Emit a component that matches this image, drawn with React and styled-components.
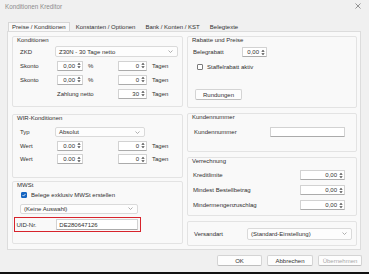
import React from 'react';
import styled, { createGlobalStyle } from 'styled-components';

const GlobalStyle = createGlobalStyle`
  html, body { margin: 0; padding: 0; }
  body { background: #f0f0f0; font-family: "Liberation Sans", Arial, sans-serif; }
`;

const Window = styled.div`
  width: 369px;
  height: 274px;
  box-sizing: border-box;
  background: #f0f0f0;
  color: #303030;
  font-size: 6px;
  display: flex;
  flex-direction: column;
  border-bottom: 2px solid #121212;
  overflow: hidden;
`;

const TitleBar = styled.div`
  height: 12px;
  display: flex;
  align-items: center;
  justify-content: space-between;
  padding: 0 8px 0 5px;
  color: #8c8c8c;
  font-size: 6.3px;
`;

const TabStrip = styled.div`
  display: flex;
  gap: 2px;
  margin: 10px 0 0 8px;
  height: 9px;
  position: relative;
  z-index: 1;
`;

const Tab = styled.div`
  height: 9px;
  padding: 0 3px;
  box-sizing: border-box;
  white-space: nowrap;
  border: 1px solid ${({ $active }) => ($active ? '#d6d6d6' : 'transparent')};
  border-bottom: none;
  background: ${({ $active }) => ($active ? '#f9f9f9' : 'transparent')};
  line-height: 8px;
`;

const Panel = styled.div`
  margin-left: 7px;
  width: 354px;
  height: 219px;
  box-sizing: border-box;
  background: #f9f9f9;
  border: 1px solid #dcdcdc;
  padding: 4px 3px 0 4px;
  display: grid;
  grid-template-columns: 171px 170px;
  column-gap: 4px;
  align-items: start;
`;

const Column = styled.div`
  display: flex;
  flex-direction: column;
`;

const Group = styled.div`
  height: ${({ $h }) => $h}px;
  margin-top: ${({ $mt = 0 }) => $mt}px;
  box-sizing: border-box;
  border: 1px solid #e3e3e3;
  border-radius: 2px;
  padding: 0 4px;
  display: flex;
  flex-direction: column;
  justify-content: ${({ $center }) => ($center ? 'center' : 'flex-start')};
`;

const GroupTitle = styled.div`
  line-height: 6px;
  height: 6px;
  white-space: nowrap;
`;

const FieldGrid = styled.div`
  display: grid;
  grid-template-columns: ${({ $cols }) => $cols};
  grid-auto-rows: ${({ $rh = 11 }) => $rh}px;
  row-gap: ${({ $gap = 3 }) => $gap}px;
  align-items: center;
  margin-top: ${({ $mt = 0 }) => $mt}px;
  padding-left: ${({ $pl = 0 }) => $pl}px;
`;

const Label = styled.span`
  white-space: nowrap;
  grid-column: ${({ $col = 'auto' }) => $col};
`;

const Unit = styled.span`
  padding-left: 5px;
  white-space: nowrap;
`;

const Input = styled.div`
  height: ${({ $h = 10 }) => $h}px;
  width: ${({ $w }) => ($w ? `${$w}px` : 'auto')};
  grid-column: ${({ $col = 'auto' }) => $col};
  box-sizing: border-box;
  background: #fff;
  border: 1px solid #d2d2d2;
  border-bottom-color: #ababab;
  border-radius: 1px;
  display: flex;
  align-items: center;
  justify-content: ${({ $left }) => ($left ? 'flex-start' : 'flex-end')};
  gap: 2px;
  padding: 0 1px 0 2px;
  white-space: nowrap;
`;

const Select = styled.div`
  height: ${({ $h = 11 }) => $h}px;
  width: ${({ $w }) => ($w ? `${$w}px` : 'auto')};
  grid-column: ${({ $col = 'auto' }) => $col};
  margin-left: ${({ $ml = 0 }) => $ml}px;
  box-sizing: border-box;
  background: #fdfdfd;
  border: 1px solid #dadada;
  border-radius: 2px;
  display: flex;
  align-items: center;
  justify-content: space-between;
  padding: 0 4px 0 3px;
  white-space: nowrap;
`;

const CheckRow = styled.div`
  height: 10px;
  display: flex;
  align-items: center;
  gap: 4px;
  padding-left: ${({ $pl = 0 }) => $pl}px;
  margin-top: ${({ $mt = 0 }) => $mt}px;
  white-space: nowrap;
`;

const Box = styled.span`
  width: 6px;
  height: 6px;
  box-sizing: border-box;
  border-radius: 1px;
  border: 1px solid ${({ $on }) => ($on ? '#1665c1' : '#7a7a7a')};
  background: ${({ $on }) => ($on ? '#1665c1' : '#fff')};
  display: flex;
  align-items: center;
  justify-content: center;
`;

const Button = styled.div`
  width: ${({ $w }) => $w}px;
  height: ${({ $h = 11 }) => $h}px;
  margin-top: ${({ $mt = 0 }) => $mt}px;
  margin-left: ${({ $ml = 0 }) => $ml}px;
  box-sizing: border-box;
  background: #fdfdfd;
  border: 1px solid #d4d4d4;
  border-bottom-color: #bdbdbd;
  border-radius: 2px;
  display: flex;
  align-items: center;
  justify-content: center;
  color: ${({ $disabled }) => ($disabled ? '#a8a8a8' : 'inherit')};
  white-space: nowrap;
`;

const MarkedRow = styled.div`
  margin-left: -3px;
  width: 127px;
  height: 15px;
  box-sizing: border-box;
  border: 1.5px solid #d7232c;
  display: flex;
  align-items: center;
  padding: 0 2px 0 1.5px;
`;

const MarkedLabel = styled.span`
  width: 40px;
  white-space: nowrap;
`;

const Stack = styled.div`
  display: flex;
  flex-direction: column;
  gap: ${({ $gap = 0 }) => $gap}px;
  margin-top: ${({ $mt = 0 }) => $mt}px;
`;

const Footer = styled.div`
  display: flex;
  justify-content: flex-end;
  gap: 5px;
  margin-top: 5px;
  padding-right: 7px;
`;

const Spin = () => (
  <svg width="4" height="7" viewBox="0 0 4 7">
    <polygon points="0.3,2.8 2,0.8 3.7,2.8" fill="#4a4a4a" />
    <polygon points="0.3,4.2 2,6.2 3.7,4.2" fill="#4a4a4a" />
  </svg>
);

const Chevron = () => (
  <svg width="5" height="3" viewBox="0 0 5 3">
    <polyline points="0.5,0.5 2.5,2.5 4.5,0.5" fill="none" stroke="#9a9a9a" strokeWidth="0.8" />
  </svg>
);

const Tick = () => (
  <svg width="4" height="4" viewBox="0 0 4 4">
    <polyline points="0.5,2 1.6,3.1 3.5,0.9" fill="none" stroke="#fff" strokeWidth="0.8" />
  </svg>
);

const CloseIcon = () => (
  <svg width="6" height="6" viewBox="0 0 6 6">
    <path d="M0.5 0.5 L5.5 5.5 M5.5 0.5 L0.5 5.5" stroke="#6a6a6a" strokeWidth="0.7" />
  </svg>
);

const SpinInput = ({ value, ...rest }) => (
  <Input {...rest}>
    <span>{value}</span>
    <Spin />
  </Input>
);

const Dropdown = ({ text, ...rest }) => (
  <Select {...rest}>
    <span>{text}</span>
    <Chevron />
  </Select>
);

const Check = ({ on, label, ...rest }) => (
  <CheckRow {...rest}>
    <Box $on={on}>{on && <Tick />}</Box>
    <span>{label}</span>
  </CheckRow>
);

const kondCols = '37px 26px 35px 29px 1fr';

export default function App() {
  return (
    <>
      <GlobalStyle />
      <Window>
        <TitleBar>
          <span>Konditionen Kreditor</span>
          <CloseIcon />
        </TitleBar>
        <TabStrip>
          <Tab $active>Preise / Konditionen</Tab>
          <Tab>Konstanten / Optionen</Tab>
          <Tab>Bank / Konten / KST</Tab>
          <Tab>Belegtexte</Tab>
        </TabStrip>
        <Panel>
          <Column>
            <Group $h={71}>
              <GroupTitle>Konditionen</GroupTitle>
              <FieldGrid $cols={kondCols} $mt={3} $pl={3}>
                <Label>ZKD</Label>
                <Dropdown $col="2 / -1" $ml={-2} text="Z30N  -  30 Tage netto" />
                <Label>Skonto</Label>
                <SpinInput value="0,00" />
                <Unit>%</Unit>
                <SpinInput value="0" />
                <Unit>Tagen</Unit>
                <Label>Skonto</Label>
                <SpinInput value="0,00" />
                <Unit>%</Unit>
                <SpinInput value="0" />
                <Unit>Tagen</Unit>
                <Label $col="2 / span 2">Zahlung netto</Label>
                <SpinInput value="30" />
                <Unit>Tagen</Unit>
              </FieldGrid>
            </Group>
            <Group $h={64} $mt={7}>
              <GroupTitle>WIR-Konditionen</GroupTitle>
              <FieldGrid $cols={kondCols} $mt={6} $pl={3} $rh={10} $gap={3.5}>
                <Label>Typ</Label>
                <Dropdown $col="2 / -1" $ml={-2} $w={90} $h={10} text="Absolut" />
                <Label>Wert</Label>
                <SpinInput value="0.00" />
                <span />
                <SpinInput value="0" />
                <Unit>Tagen</Unit>
                <Label>Wert</Label>
                <SpinInput value="0.00" />
                <span />
                <SpinInput value="0" />
                <Unit>Tagen</Unit>
              </FieldGrid>
            </Group>
            <Group $h={63} $mt={3}>
              <GroupTitle>MWSt</GroupTitle>
              <Stack $mt={2} $gap={3.5}>
                <Check on $pl={4} label="Belege exklusiv MWSt erstellen" />
                <Dropdown $ml={3} $w={118} $h={10} text="(Keine Auswahl)" />
                <MarkedRow>
                  <MarkedLabel>UID-Nr.</MarkedLabel>
                  <Input $w={82} $h={11} $left>DE280647126</Input>
                </MarkedRow>
              </Stack>
            </Group>
          </Column>
          <Column>
            <Group $h={72}>
              <GroupTitle>Rabatte und Preise</GroupTitle>
              <FieldGrid $cols="49px 25px" $mt={4} $pl={1} $rh={10}>
                <Label>Belegrabatt</Label>
                <SpinInput value="0,00" />
              </FieldGrid>
              <Check $pl={5} $mt={5} label="Staffelrabatt aktiv" />
              <Button $w={47} $mt={17} $ml={3}>Rundungen</Button>
            </Group>
            <Group $h={39} $mt={5}>
              <GroupTitle>Kundennummer</GroupTitle>
              <FieldGrid $cols="76px 75px" $mt={7} $pl={2} $rh={10}>
                <Label>Kundennummer</Label>
                <Input />
              </FieldGrid>
            </Group>
            <Group $h={59} $mt={5}>
              <GroupTitle>Verrechnung</GroupTitle>
              <FieldGrid $cols="107px 45px" $mt={6} $pl={1} $rh={10} $gap={5}>
                <Label>Kreditlimite</Label>
                <SpinInput value="0,00" />
                <Label>Mindest Bestellbetrag</Label>
                <SpinInput value="0,00" />
                <Label>Mindermengenzuschlag</Label>
                <SpinInput value="0,00" />
              </FieldGrid>
            </Group>
            <Group $h={25} $mt={5} $center>
              <FieldGrid $cols="53px 105px" $pl={2} $rh={12}>
                <Label>Versandart</Label>
                <Dropdown $h={12} text="(Standard-Einstellung)" />
              </FieldGrid>
            </Group>
          </Column>
        </Panel>
        <Footer>
          <Button $w={45}>OK</Button>
          <Button $w={46}>Abbrechen</Button>
          <Button $w={44} $disabled>Übernehmen</Button>
        </Footer>
      </Window>
    </>
  );
}
